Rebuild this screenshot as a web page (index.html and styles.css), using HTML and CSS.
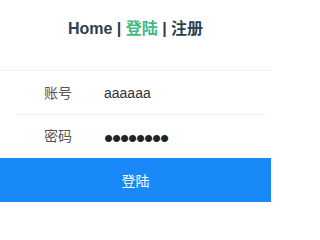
FILE: index.html
```html
<!DOCTYPE html>
<html lang="zh-CN">
<head>
<meta charset="utf-8">
<title>登陆</title>
<link rel="stylesheet" href="styles.css">
</head>
<body>
<div class="app">
  <nav class="nav">
    <a class="nav-link" href="#">Home</a> | <a class="nav-link active" href="#">登陆</a> | <a class="nav-link" href="#">注册</a>
  </nav>
  <form class="form">
    <div class="group">
      <div class="field">
        <label class="label">账号</label>
        <input class="input" type="text" value="aaaaaa">
      </div>
      <div class="field">
        <label class="label">密码</label>
        <input class="input pwd" type="password" value="aaaaaaaa">
      </div>
    </div>
    <button class="btn" type="button">登陆</button>
  </form>
</div>
</body>
</html>
```

FILE: styles.css
```css
html, body {
  margin: 0;
  padding: 0;
  background: #fff;
}
.app {
  width: 271px;
  font-family: "Liberation Sans", Arial, "Noto Sans CJK SC", sans-serif;
  color: #2c3e50;
}
.nav {
  height: 70px;
  box-sizing: border-box;
  padding-top: 20px;
  text-align: center;
  font-size: 16px;
  font-weight: bold;
  line-height: 18px;
  color: #2c3e50;
}
.nav-link {
  color: #2c3e50;
  text-decoration: none;
  font-weight: bold;
}
.nav-link.active {
  color: #42b983;
}
.form {
  margin: 0;
}
.group {
  border-top: 1px solid #f0f1f3;
}
.field {
  display: flex;
  align-items: center;
  height: 43px;
  padding: 0 16px;
  font-size: 14px;
}
.field + .field {
  height: 44px;
  position: relative;
}
.field + .field::before {
  content: "";
  position: absolute;
  left: 16px;
  right: 6px;
  top: 0;
  border-top: 1px solid #f0f1f3;
}
.label {
  width: 84px;
  flex: none;
  text-align: center;
  color: #555657;
  margin-right: 4px;
  line-height: 24px;
}
.input {
  flex: 1;
  min-width: 0;
  border: 0;
  outline: none;
  padding: 0;
  margin: 0;
  background: transparent;
  font-family: "Liberation Sans", Arial, sans-serif;
  font-size: 14px;
  line-height: 24px;
  height: 24px;
  color: #323233;
}
.pwd {
  font-size: 26px;
  letter-spacing: -1.1px;
  margin-top: 5px;
  color: #222;
}
.btn {
  display: block;
  width: 271px;
  height: 44px;
  margin: 0;
  padding: 0;
  border: 1px solid #1989fa;
  background: #1989fa;
  color: #fff;
  font-family: "Liberation Sans", Arial, "Noto Sans CJK SC", sans-serif;
  font-size: 14px;
  cursor: pointer;
}
```
